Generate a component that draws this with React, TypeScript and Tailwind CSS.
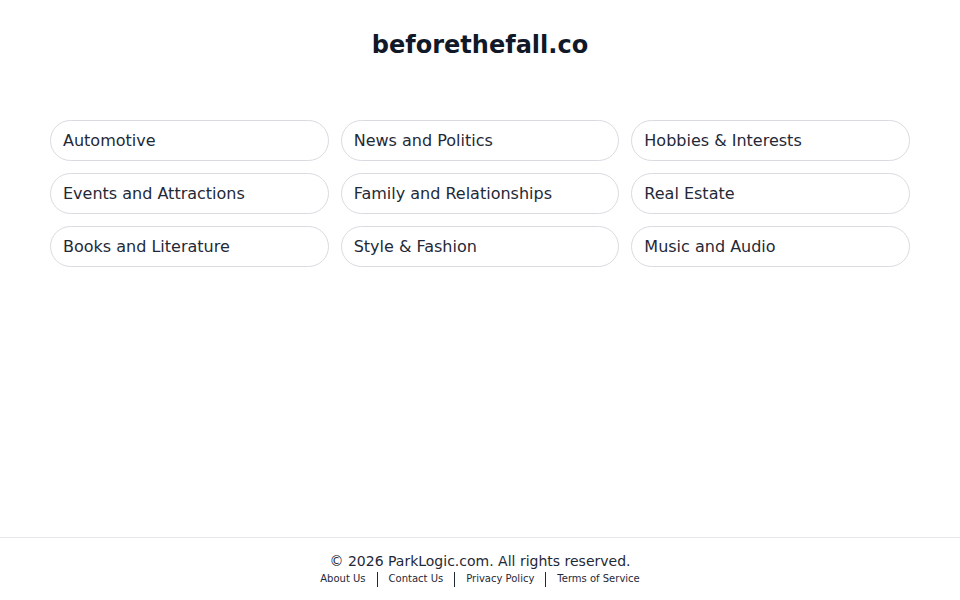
import React from "react";

const items = [
  "Automotive",
  "News and Politics",
  "Hobbies & Interests",
  "Events and Attractions",
  "Family and Relationships",
  "Real Estate",
  "Books and Literature",
  "Style & Fashion",
  "Music and Audio",
];

const links = ["About Us", "Contact Us", "Privacy Policy", "Terms of Service"];

export default function App() {
  return (
    <div
      className="w-[960px] h-[600px] bg-white flex flex-col text-[#1f2937]"
      style={{ fontFamily: '"DejaVu Sans", sans-serif' }}
    >
      <main className="h-[537px] px-[50px] pt-[29px]">
        <h1 className="text-center text-2xl leading-8 font-bold text-[#111827]">
          beforethefall.co
        </h1>
        <div className="mt-[59px] grid grid-cols-3 gap-x-3 gap-y-3">
          {items.map((t) => (
            <div
              key={t}
              className="h-[41px] flex items-center px-[12px] rounded-full border border-[#d9dbe0] text-base text-[#1f2937]"
            >
              {t}
            </div>
          ))}
        </div>
      </main>
      <footer className="flex-1 border-t border-[#e5e7eb] flex flex-col items-center pt-[13px]">
        <p className="text-sm leading-5 text-[#1f2937]">
          © 2026 ParkLogic.com. All rights reserved.
        </p>
        <div className="flex items-center text-[10px] leading-4 text-[#1f2937]">
          {links.map((l, i) => (
            <React.Fragment key={l}>
              {i > 0 && <span className="w-px h-[15px] bg-[#1f2937] mx-[11px]" />}
              <a href="#">{l}</a>
            </React.Fragment>
          ))}
        </div>
      </footer>
    </div>
  );
}
